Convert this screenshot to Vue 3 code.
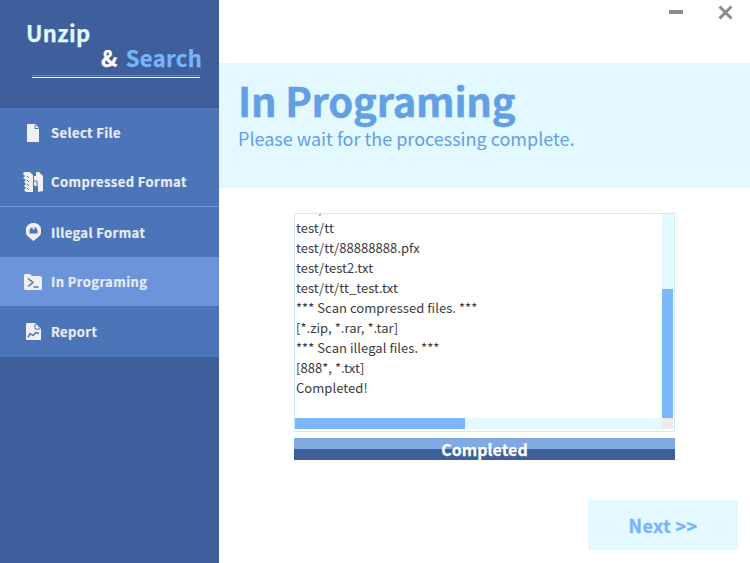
<script setup>
const nav = [
  { label: 'Select File', icon: 'file' },
  { label: 'Compressed Format', icon: 'zip', line: true },
  { label: 'Illegal Format', icon: 'shield' },
  { label: 'In Programing', icon: 'term', active: true },
  { label: 'Report', icon: 'report' },
]
const lines = [
  'test/',
  'test/tt',
  'test/tt/88888888.pfx',
  'test/test2.txt',
  'test/tt/tt_test.txt',
  '*** Scan compressed files. ***',
  '[*.zip, *.rar, *.tar]',
  '*** Scan illegal files. ***',
  '[888*, *.txt]',
  'Completed!',
]
</script>

<template>
  <div class="app">
    <aside class="side">
      <div class="brand">
        <div class="unzip">Unzip</div>
        <div class="search"><span class="amp">&amp;</span><span class="word">Search</span></div>
        <div class="rule"></div>
      </div>
      <nav class="nav">
        <div v-for="n in nav" :key="n.label" class="item" :class="{ active: n.active, line: n.line }">
          <span class="ico">
            <svg v-if="n.icon === 'file'" width="12" height="18" viewBox="0 0 12 18">
              <path d="M0 0H8L12 4V18H0Z" fill="#f0f0f3" />
              <path d="M8 1V4.500H11.500" fill="none" stroke="#4c75b9" stroke-width="1" />
            </svg>
            <svg v-else-if="n.icon === 'zip'" width="20" height="20" viewBox="0 0 20 20">
              <path d="M1 0H7L10 3V20H3L1 18L3 16L1 14L3 12L1 10L3 8L0 6L2 4L0 2Z" fill="#f0f0f3" />
              <path d="M13 0H16L20 4V19L15 20V14H11V4H13Z" fill="#f0f0f3" />
              <path d="M4 4L6 6M4 8L6 10M4 12L6 14M4 16L6 18" stroke="#4c75b9" stroke-width="1" />
              <path d="M10 9H14V19M11 13V19" fill="none" stroke="#4c75b9" stroke-width="1" />
            </svg>
            <svg v-else-if="n.icon === 'shield'" width="16" height="18" viewBox="-1 0 16 18">
              <path d="M7.500 0C11.500 0 15 2.500 15 6.500V10C15 12.500 11 15 7.500 18C4 15 0 12.500 0 10V6.500C0 2.500 3.500 0 7.500 0Z" fill="#f0f0f3" />
              <path d="M3.500 10.500V8C3.500 5.500 5.500 4 7.500 4C9.500 4 11.500 5.500 11.500 8V10.500Z" fill="#4c75b9" />
              <rect x="6.500" y="3.500" width="2" height="3" fill="#f0f0f3" />
            </svg>
            <svg v-else-if="n.icon === 'term'" width="18" height="16" viewBox="0 0 18 16">
              <path d="M0 1L1 0H6L8 2H16L18 3V15L17 16H1L0 15Z" fill="#f0f0f3" />
              <path d="M4 4.500L9 8.500L4 12.500" fill="none" stroke="#4c75b9" stroke-width="1.500" />
              <path d="M9.500 13H14.500" stroke="#4c75b9" stroke-width="1.500" />
            </svg>
            <svg v-else width="16" height="17" viewBox="-1 0 16 17">
              <path d="M1 0H9L15 6V17H0V1Z" fill="#f0f0f3" />
              <path d="M9 1V6H14" fill="none" stroke="#4c75b9" stroke-width="1" />
              <path d="M2 14.500L4 10.500L7 12.500L10 9.500L13 10.500" fill="none" stroke="#4c75b9" stroke-width="1.500" />
            </svg>
          </span>
          <span class="label">{{ n.label }}</span>
        </div>
      </nav>
    </aside>

    <main class="main">
      <div class="winbar">
        <svg class="minbtn" width="14" height="4" viewBox="0 0 14 4"><rect width="14" height="4" fill="#8c8c8c" /></svg>
        <svg class="closebtn" width="15" height="15" viewBox="0 0 15 15"><path d="M1.500 1.500L13.500 13.500M13.500 1.500L1.500 13.500" stroke="#8c8c8c" stroke-width="3" /></svg>
      </div>
      <header class="head">
        <h1>In Programing</h1>
        <p>Please wait for the processing complete.</p>
      </header>
      <section class="body">
        <div class="console">
          <div class="view">
            <div class="text">
              <div v-for="l in lines" :key="l" class="row">{{ l }}</div>
            </div>
            <div class="vbar"><div class="vthumb"></div></div>
          </div>
          <div class="bottom">
            <div class="hbar"><div class="hthumb"></div></div>
            <div class="corner"></div>
          </div>
        </div>
        <div class="progress">
          <div class="ptop"></div>
          <div class="pbot"></div>
          <div class="ptext">Completed</div>
        </div>
      </section>
      <footer class="foot">
        <button class="next">Next &gt;&gt;</button>
      </footer>
    </main>
  </div>
</template>

<style>
html, body { margin: 0; padding: 0; background: #fff; }
</style>

<style scoped>
.app {
  width: 750px;
  height: 563px;
  display: flex;
  overflow: hidden;
  font-family: "Noto Sans CJK SC", "Noto Sans", sans-serif;
}
.side {
  width: 219px;
  flex: none;
  background: #3e5f9b;
}
.brand {
  height: 108px;
  position: relative;
}
.unzip {
  position: absolute;
  left: 26px;
  top: 16px;
  font-size: 22px;
  line-height: 32px;
  font-weight: 700;
  color: #e3f8ff;
  letter-spacing: .4px;
  -webkit-text-stroke: .25px #e3f8ff;
}
.search {
  position: absolute;
  left: 101px;
  top: 41px;
  font-size: 22px;
  line-height: 32px;
  font-weight: 700;
  white-space: nowrap;
  letter-spacing: .4px;
  display: flex;
  gap: 8px;
}
.amp { color: #fff; -webkit-text-stroke: .25px #fff; }
.word { color: #77b5fb; -webkit-text-stroke: .25px #77b5fb; }
.rule {
  position: absolute;
  left: 32px;
  top: 75px;
  width: 168px;
  height: 3px;
  box-sizing: border-box;
  border-top: 1px solid #6b8cc6;
  border-bottom: 1px solid #f4f8ff;
}
.nav { background: #4c75b9; height: 249px; }
.item {
  height: 50px;
  display: flex;
  align-items: center;
  box-sizing: border-box;
}
.item:first-child { height: 49px; }
.item:last-child { height: 51px; }
.item.line { border-bottom: 1px solid #6d93d8; }
.item.active { height: 49px; background: #6b94db; }
.ico {
  width: 51px;
  flex: none;
  display: flex;
  justify-content: center;
  padding-left: 15px;
  box-sizing: border-box;
}
.ico svg { display: block; }
.label {
  font-size: 13px;
  font-weight: 700;
  color: #e9edf5;
  letter-spacing: .4px;
  white-space: nowrap;
  -webkit-text-stroke: .2px #e9edf5;
}
.main {
  flex: 1;
  display: flex;
  flex-direction: column;
  background: #fff;
  min-width: 0;
}
.winbar {
  height: 63px;
  position: relative;
  flex: none;
}
.minbtn { position: absolute; left: 450px; top: 10px; }
.closebtn { position: absolute; left: 499px; top: 5px; }
.head {
  height: 125px;
  flex: none;
  background: #e3f8ff;
  box-sizing: border-box;
  padding: 11px 0 0 19px;
  color: #639fe4;
}
.head h1 {
  margin: 0;
  font-size: 40px;
  line-height: 52px;
  font-weight: 700;
  letter-spacing: -.25px;
  -webkit-text-stroke: .4px #639fe4;
}
.head p {
  margin: 0;
  font-size: 18px;
  line-height: 24px;
}
.body {
  padding: 25px 0 0 75px;
  flex: none;
}
.console {
  width: 381px;
  height: 219px;
  box-sizing: border-box;
  border: 1px solid #cde9fb;
  display: flex;
  flex-direction: column;
  background: #fff;
}
.view {
  height: 204px;
  flex: none;
  display: flex;
}
.text {
  flex: 1;
  padding: 0 0 0 1px;
  overflow: hidden;
  font-size: 13px;
  line-height: 20px;
  letter-spacing: .05px;
  color: #3b3b3b;
}
.row { height: 20px; white-space: nowrap; }
.row:first-child { margin-top: -16px; }
.vbar {
  width: 11px;
  margin-right: 1px;
  background: #e3f8ff;
  position: relative;
  flex: none;
}
.vthumb {
  position: absolute;
  left: 0;
  right: 0;
  top: 75px;
  height: 129px;
  background: #7ab8fb;
}
.bottom { height: 12px; display: flex; flex: none; }
.hbar { flex: 1; background: #e3f8ff; height: 11px; }
.hthumb { width: 170px; height: 11px; background: #7ab8fb; }
.corner { width: 11px; height: 11px; margin-right: 1px; background: #ececec; }
.progress {
  width: 381px;
  height: 22px;
  margin-top: 6px;
  position: relative;
}
.ptop { height: 11px; background: #81a9e2; }
.pbot { height: 11px; background: #3e5f9b; }
.ptext {
  position: absolute;
  inset: 0;
  text-align: center;
  font-size: 16px;
  line-height: 22px;
  font-weight: 700;
  color: #fff;
  -webkit-text-stroke: .25px #fff;
}
.foot {
  flex: 1;
  display: flex;
  justify-content: flex-end;
  align-items: flex-start;
  padding: 40px 12px 0 0;
}
.next {
  width: 150px;
  height: 50px;
  border: 0;
  padding: 0;
  background: #e3f8ff;
  color: #77b5fb;
  font-family: inherit;
  font-size: 18px;
  font-weight: 700;
  letter-spacing: .4px;
  -webkit-text-stroke: .3px #77b5fb;
}
</style>
